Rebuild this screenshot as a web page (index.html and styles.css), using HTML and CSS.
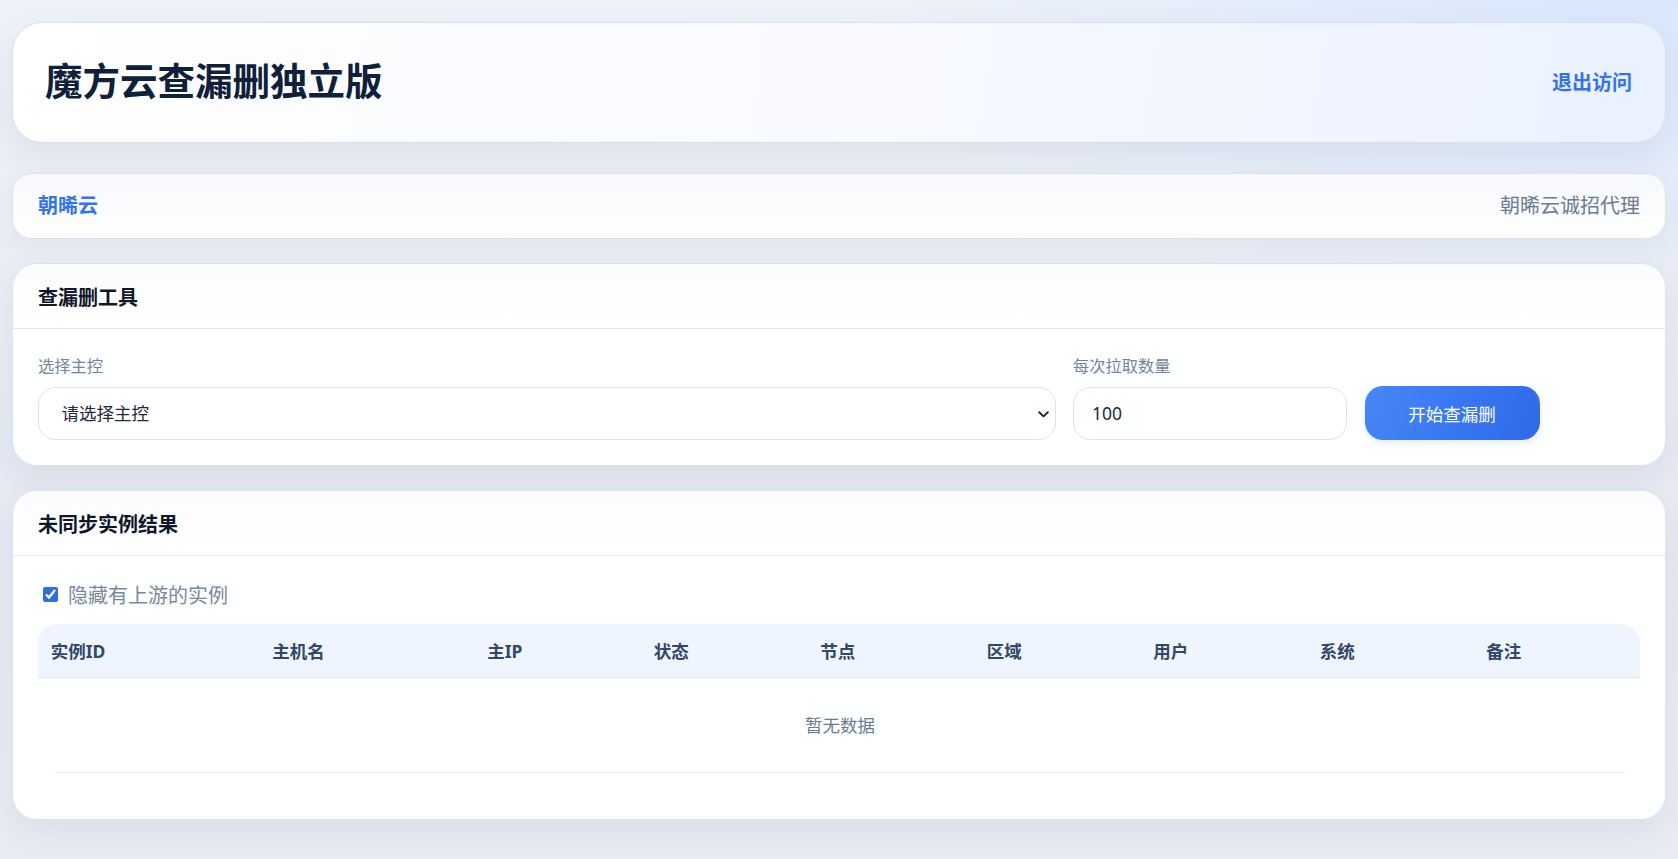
FILE: index.html
```html
<!DOCTYPE html>
<html lang="zh-CN">
<head>
<meta charset="utf-8">
<title>魔方云查漏删独立版</title>
<link rel="stylesheet" href="styles.css">
</head>
<body>
<div class="page">
  <header class="topbar">
    <h1 class="title">魔方云查漏删独立版</h1>
    <a class="logout" href="#">退出访问</a>
  </header>

  <div class="notice">
    <span class="brand">朝晞云</span>
    <span class="notice-text">朝晞云诚招代理</span>
  </div>

  <section class="card">
    <div class="card-head">查漏删工具</div>
    <div class="card-body">
      <div class="form-grid">
        <div class="field">
          <label class="field-label">选择主控</label>
          <div class="select-wrap">
            <select class="control select">
              <option>请选择主控</option>
            </select>
            <svg class="chevron" width="11" height="7" viewBox="0 0 11 7"><path d="M1.2 1.2 L5.5 5.4 L9.8 1.2" fill="none" stroke="#1e293b" stroke-width="2" stroke-linecap="round" stroke-linejoin="round"/></svg>
          </div>
        </div>
        <div class="field">
          <label class="field-label">每次拉取数量</label>
          <input class="control input" type="text" value="100">
        </div>
        <button class="btn-primary">开始查漏删</button>
        <div></div>
      </div>
    </div>
  </section>

  <section class="card">
    <div class="card-head">未同步实例结果</div>
    <div class="card-body">
      <label class="check-row">
        <input type="checkbox" class="check" checked>
        <span>隐藏有上游的实例</span>
      </label>
      <div class="table-wrap">
        <table class="result-table">
          <thead>
            <tr>
              <th>实例ID</th>
              <th>主机名</th>
              <th>主IP</th>
              <th>状态</th>
              <th>节点</th>
              <th>区域</th>
              <th>用户</th>
              <th>系统</th>
              <th>备注</th>
            </tr>
          </thead>
          <tbody>
            <tr>
              <td colspan="9" class="empty-cell"><div class="empty">暂无数据</div></td>
            </tr>
          </tbody>
        </table>
      </div>
    </div>
  </section>
</div>
</body>
</html>
```

FILE: styles.css
```css
* { box-sizing: border-box; }

html, body { margin: 0; padding: 0; }

body {
  min-height: 100vh;
  font-family: "Noto Sans", "Noto Sans CJK SC", sans-serif;
  color: #1e293b;
  background:
    radial-gradient(ellipse 45% 35% at 96% 0%, #dae7fd 0%, rgba(218,231,253,0) 100%),
    linear-gradient(180deg, #eef2f8 0%, #e5eaf3 55%, #e8ecf4 100%);
}

.page {
  display: flex;
  flex-direction: column;
  padding: 22px 12px 40px;
}

/* top bar */
.topbar {
  height: 121px;
  display: flex;
  align-items: center;
  justify-content: space-between;
  padding: 0 33px 0 32px;
  border: 1px solid #d8dfea;
  border-radius: 30px;
  background: linear-gradient(100deg, #ffffff 0%, #f7f9ff 55%, #eaf1ff 100%);
  box-shadow: 0 12px 32px rgba(40, 60, 100, 0.08);
  margin-bottom: 30px;
}

.title {
  margin: 0 0 4px;
  font-size: 37.5px;
  line-height: 46px;
  font-weight: 700;
  color: #10203a;
}

.logout {
  font-size: 20px;
  line-height: 26px;
  font-weight: 700;
  color: #3471f0;
  text-decoration: none;
}

/* notice */
.notice {
  height: 66px;
  display: flex;
  align-items: center;
  justify-content: space-between;
  padding: 0 25px;
  border: 1px solid #dde3ed;
  border-radius: 20px;
  background: linear-gradient(180deg, #f6f8fb 0%, #ffffff 100%);
  box-shadow: 0 8px 24px rgba(40, 60, 100, 0.05);
  margin-bottom: 24px;
}

.brand {
  font-size: 20px;
  line-height: 26px;
  font-weight: 700;
  color: #3473f0;
}

.notice-text {
  font-size: 20px;
  line-height: 26px;
  color: #6b7b92;
}

/* cards */
.card {
  border: 1px solid #dbe2ec;
  border-radius: 25px;
  background: rgba(255, 255, 255, 0.96);
  box-shadow: 0 12px 32px rgba(40, 60, 100, 0.07);
  margin-bottom: 24px;
  overflow: hidden;
}

.card-head {
  height: 65px;
  display: flex;
  align-items: center;
  padding: 0 25px;
  border-bottom: 1px solid #e6eaf0;
  font-size: 20px;
  font-weight: 700;
  color: #0f172a;
  background: linear-gradient(180deg, #fbfcfe 0%, #ffffff 100%);
}

.card-body {
  padding: 25px 25px 25px;
}

/* form */
.form-grid {
  display: grid;
  grid-template-columns: minmax(0, 1fr) 274px 175px 83px;
  column-gap: 17.5px;
  align-items: end;
}

.field {
  display: flex;
  flex-direction: column;
}

.field-label {
  font-size: 16.25px;
  line-height: 25px;
  color: #74849a;
  margin-bottom: 7.5px;
}

.select-wrap {
  position: relative;
}

.control {
  width: 100%;
  height: 53.5px;
  border: 1px solid #dde2eb;
  border-radius: 17.5px;
  background: #ffffff;
  font-family: "Noto Sans", "Noto Sans CJK SC", sans-serif;
  font-size: 17.5px;
  color: #1e293b;
  outline: none;
}

.select {
  appearance: none;
  -webkit-appearance: none;
  padding: 0 40px 0 22.5px;
}

.chevron {
  position: absolute;
  right: 7px;
  top: 50%;
  margin-top: -2px;
}

.input {
  padding: 0 18px;
}

.btn-primary {
  height: 54px;
  border: none;
  border-radius: 18px;
  background: linear-gradient(110deg, #4886f8 0%, #3a78f2 50%, #2f6ae8 100%);
  color: #ffffff;
  font-family: "Noto Sans", "Noto Sans CJK SC", sans-serif;
  font-size: 17.5px;
  cursor: pointer;
  box-shadow: 0 3px 8px rgba(47, 106, 232, 0.12);
}

/* checkbox */
.check-row {
  display: flex;
  align-items: center;
  height: 27.5px;
  margin-bottom: 15px;
  font-size: 20px;
  color: #7a889e;
}

.check {
  width: 15px;
  height: 15px;
  margin: 0 10px 0 5px;
  accent-color: #2f6de4;
}

/* table */
.table-wrap {
  padding-bottom: 21px;
}

.result-table {
  width: 100%;
  border-collapse: separate;
  border-spacing: 0;
  table-layout: fixed;
}

.result-table th {
  height: 54px;
  padding: 0 12.8px;
  text-align: left;
  font-size: 17.5px;
  font-weight: 700;
  color: #334766;
  background: #eef5ff;
  border-bottom: 1px solid #e3e9f2;
}

.result-table th:nth-child(1) { width: 13.82%; border-top-left-radius: 20px; }
.result-table th:nth-child(2) { width: 13.42%; }
.result-table th:nth-child(9) { border-top-right-radius: 20px; }

.empty-cell {
  padding: 0 15px 0 17px;
}

.empty {
  height: 95px;
  display: flex;
  align-items: center;
  justify-content: center;
  border-bottom: 1px solid #e8ecf2;
  font-size: 17.5px;
  color: #6b7a90;
}
```
